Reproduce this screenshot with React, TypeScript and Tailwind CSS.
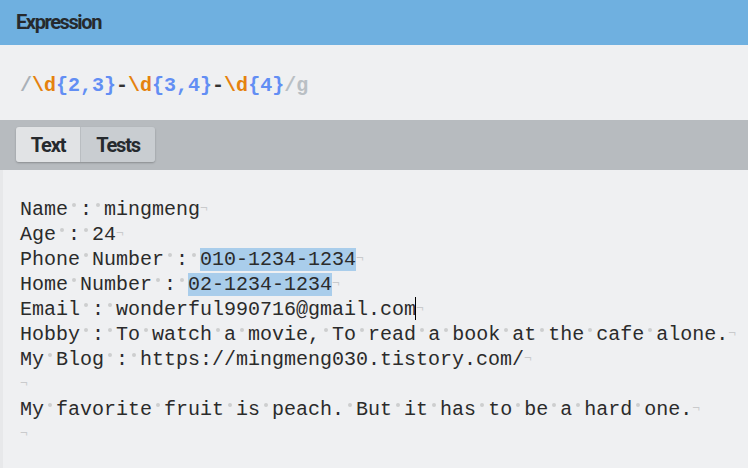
import React from "react";

type Part = { t: string; hl?: boolean; cursor?: boolean };

const mono = { fontFamily: '"Liberation Mono", monospace' };

function Dot() {
  return (
    <span className="inline-block w-[12px] text-center">
      <span className="relative top-[-5px] inline-block w-[4px] h-[4px] rounded-full bg-[#cdcecf] align-middle" />
    </span>
  );
}

function Eol() {
  return (
    <span className="inline-block w-[12px] text-[13px] text-[#c9cacc] relative top-[-3px]">¬</span>
  );
}

function renderChars(s: string, keyBase: string) {
  const out: React.ReactNode[] = [];
  let buf = "";
  let k = 0;
  for (const ch of s) {
    if (ch === " ") {
      if (buf) out.push(<span key={keyBase + k++}>{buf}</span>);
      buf = "";
      out.push(<Dot key={keyBase + k++} />);
    } else buf += ch;
  }
  if (buf) out.push(<span key={keyBase + k++}>{buf}</span>);
  return out;
}

function Line({ parts }: { parts: Part[] }) {
  return (
    <div className="whitespace-pre h-[25px] leading-[25px]">
      {parts.map((p, i) =>
        p.cursor ? (
          <span key={i} className="relative">
            <span className="absolute left-[-1px] top-[-1px] w-[1px] h-[23px] bg-black" />
          </span>
        ) : p.hl ? (
          <span key={i} className="bg-[#a9cdeb]">
            {renderChars(p.t, "h" + i)}
          </span>
        ) : (
          <React.Fragment key={i}>{renderChars(p.t, "p" + i)}</React.Fragment>
        )
      )}
      <Eol />
    </div>
  );
}

export default function App() {
  const lines: Part[][] = [
    [{ t: "Name : mingmeng" }],
    [{ t: "Age : 24" }],
    [{ t: "Phone Number : " }, { t: "010-1234-1234", hl: true }],
    [{ t: "Home Number : " }, { t: "02-1234-1234", hl: true }],
    [{ t: "Email : wonderful990716@gmail.com" }, { t: "", cursor: true }],
    [{ t: "Hobby : To watch a movie, To read a book at the cafe alone." }],
    [{ t: "My Blog : https://mingmeng030.tistory.com/" }],
    [],
    [{ t: "My favorite fruit is peach. But it has to be a hard one." }],
    [],
  ];

  const heading = { fontFamily: 'Roboto, "Liberation Sans", sans-serif' };

  return (
    <div className="w-[748px] h-[468px] overflow-hidden flex flex-col bg-[#eff0f2]">
      <div
        className="h-[45px] bg-[#6fb0e0] flex items-center pl-[16px] pb-[2px] text-[20px] font-bold text-[#262a2e] tracking-[-1.4px]"
        style={heading}
      >
        Expression
      </div>
      <div className="h-[75px] bg-[#eff0f2] pt-[28px] pl-[20px]">
        <div className="whitespace-pre text-[20px] leading-[25px] font-bold" style={mono}>
          <span className="text-[#aab1b8]">/</span>
          <span className="text-[#e5820e]">\d</span>
          <span className="text-[#628ef4]">{"{2,3}"}</span>
          <span className="text-[#333]">-</span>
          <span className="text-[#e5820e]">\d</span>
          <span className="text-[#628ef4]">{"{3,4}"}</span>
          <span className="text-[#333]">-</span>
          <span className="text-[#e5820e]">\d</span>
          <span className="text-[#628ef4]">{"{4}"}</span>
          <span className="text-[#b9bfc4]">/g</span>
        </div>
      </div>
      <div className="h-[50px] bg-[#b7bbbf] pt-[7px] pl-[16px]">
        <div
          className="flex h-[35px] w-fit rounded-[3px] overflow-hidden shadow-[0_1px_2px_rgba(0,0,0,0.25)] text-[20px] font-bold text-[#262a2e] tracking-[-1.2px]"
          style={heading}
        >
          <div className="w-[65px] bg-[#e1e3e5] flex items-center justify-center border-r border-[#b9bdc1]">
            Text
          </div>
          <div className="w-[74px] bg-[#c9cdd1] flex items-center justify-center">Tests</div>
        </div>
      </div>
      <div className="flex-1 bg-[#eff0f2] border-l-[3px] border-[#e7e8ea] pl-[17px] pt-[27px] text-[20px] text-[#2b2b2b]" style={mono}>
        {lines.map((l, i) => (
          <Line key={i} parts={l} />
        ))}
      </div>
    </div>
  );
}
